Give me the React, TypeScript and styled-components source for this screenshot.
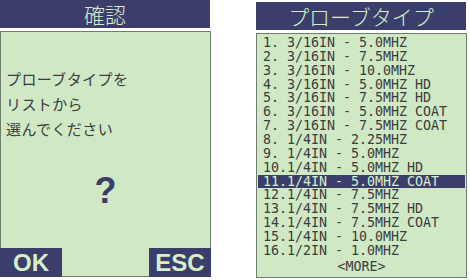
import React from "react";
import styled, { createGlobalStyle } from "styled-components";

const Global = createGlobalStyle`
  html, body { margin: 0; padding: 0; background: #ffffff; }
  body { width: 470px; height: 280px; overflow: hidden; }
`;

const NAVY = "#3b3e6b";
const LCD = "#d0e8c3";
const INK = "#3a3d3f";
const LIGHT = "#d6efc9";

const Page = styled.div`
  display: flex;
  align-items: flex-start;
  gap: 45px;
  width: 470px;
  height: 280px;
`;

const Screen = styled.div<{ $top: number; $ml: number }>`
  display: flex;
  flex-direction: column;
  width: 211px;
  margin-top: ${(p) => p.$top}px;
  margin-left: ${(p) => p.$ml}px;
`;

const Header = styled.div<{ $spacing: number }>`
  height: 28px;
  background: ${NAVY};
  color: ${LIGHT};
  display: flex;
  align-items: center;
  justify-content: center;
  font-family: "Noto Sans CJK JP", sans-serif;
  font-weight: 300;
  font-size: 21px;
  letter-spacing: ${(p) => p.$spacing}px;
  margin-right: 1px;
`;

const Body = styled.div<{ $height: number }>`
  margin-top: 3px;
  height: ${(p) => p.$height}px;
  box-sizing: border-box;
  background: ${LCD};
  border: 1px solid #6f7d6c;
  display: flex;
  flex-direction: column;
`;

const Message = styled.div`
  margin-top: 34px;
  padding-left: 5px;
  font-family: "Noto Sans CJK JP", sans-serif;
  font-size: 15px;
  letter-spacing: 0.4px;
  line-height: 25px;
  color: ${INK};
`;

const Question = styled.div`
  margin-top: 30px;
  text-align: center;
  font-family: "Liberation Sans", Arial, sans-serif;
  font-weight: 700;
  font-size: 36px;
  line-height: 40px;
  color: ${NAVY};
`;

const Footer = styled.div`
  margin-top: auto;
  display: flex;
  justify-content: space-between;
  margin-left: -1px;
  margin-right: -1px;
  margin-bottom: -1px;
`;

const Key = styled.div`
  width: 62px;
  height: 29px;
  background: ${NAVY};
  color: ${LIGHT};
  display: flex;
  align-items: center;
  justify-content: center;
  font-family: "Liberation Sans", Arial, sans-serif;
  font-weight: 700;
  font-size: 24px;
`;

const List = styled.div`
  padding-top: 2px;
  font-family: "DejaVu Sans Mono", "Liberation Mono", monospace;
  font-size: 13.3px;
  line-height: 13.87px;
  color: ${INK};
`;

const Row = styled.div<{ $selected?: boolean }>`
  height: 13.87px;
  margin: 0 1px;
  padding-left: 5px;
  white-space: pre;
  background: ${(p) => (p.$selected ? NAVY : "transparent")};
  color: ${(p) => (p.$selected ? LIGHT : INK)};
`;

const More = styled.div`
  margin-top: 2px;
  text-align: center;
  white-space: pre;
`;

const items = [
  "1. 3/16IN - 5.0MHZ",
  "2. 3/16IN - 7.5MHZ",
  "3. 3/16IN - 10.0MHZ",
  "4. 3/16IN - 5.0MHZ HD",
  "5. 3/16IN - 7.5MHZ HD",
  "6. 3/16IN - 5.0MHZ COAT",
  "7. 3/16IN - 7.5MHZ COAT",
  "8. 1/4IN - 2.25MHZ",
  "9. 1/4IN - 5.0MHZ",
  "10.1/4IN - 5.0MHZ HD",
  "11.1/4IN - 5.0MHZ COAT",
  "12.1/4IN - 7.5MHZ",
  "13.1/4IN - 7.5MHZ HD",
  "14.1/4IN - 7.5MHZ COAT",
  "15.1/4IN - 10.0MHZ",
  "16.1/2IN - 1.0MHZ",
];

export default function App() {
  return (
    <>
      <Global />
      <Page>
        <Screen $top={0} $ml={0}>
          <Header $spacing={0}>確認</Header>
          <Body $height={246}>
            <Message>
              <div>プローブタイプを</div>
              <div>リストから</div>
              <div>選んでください</div>
            </Message>
            <Question>?</Question>
            <Footer>
              <Key>OK</Key>
              <Key>ESC</Key>
            </Footer>
          </Body>
        </Screen>
        <Screen $top={2} $ml={0}>
          <Header $spacing={0}>プローブタイプ</Header>
          <Body $height={245}>
            <List>
              {items.map((t, i) => (
                <Row key={t} $selected={i === 10}>
                  {t}
                </Row>
              ))}
              <More>{"<MORE>"}</More>
            </List>
          </Body>
        </Screen>
      </Page>
    </>
  );
}
